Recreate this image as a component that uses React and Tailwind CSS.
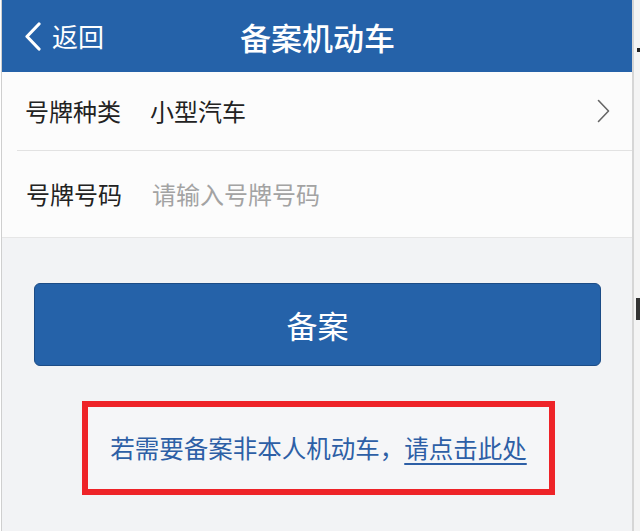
import React from "react";

export default function App() {
  const font = { fontFamily: '"Noto Sans CJK SC", "Noto Sans", sans-serif' };
  return (
    <div className="w-[640px] h-[531px] flex overflow-hidden bg-[#f2f3f5]" style={font}>
      {/* left edge */}
      <div className="w-[2px] h-full bg-white border-r border-[#cfcfcf] shrink-0" />
      {/* main phone screen */}
      <div className="w-[630px] h-full flex flex-col bg-[#f2f3f5] shrink-0">
        <div className="h-[72px] bg-[#2562a9] flex items-center relative shrink-0">
          <div className="flex items-center pl-[21px]">
            <svg width="19" height="29" viewBox="0 0 19 29" className="mr-[10px]">
              <polyline points="16,2 4,14.5 16,27" fill="none" stroke="white" strokeWidth="3.2" strokeLinecap="round" strokeLinejoin="round" />
            </svg>
            <span className="text-white text-[26px] leading-none">返回</span>
          </div>
          <div className="absolute inset-0 flex items-center justify-center pointer-events-none">
            <span className="text-white text-[31px] leading-none font-medium pl-[1px]">备案机动车</span>
          </div>
        </div>
        <div className="bg-[#fcfcfc] flex flex-col shrink-0">
          <div className="h-[78px] flex items-center pl-[23px] pr-[22px]">
            <span className="text-[24px] leading-none text-[#222] w-[125px]">号牌种类</span>
            <span className="text-[24px] leading-none text-[#222] flex-1">小型汽车</span>
            <svg width="13" height="24" viewBox="0 0 13 24">
              <polyline points="1.5,1.5 11.5,12 1.5,22.5" fill="none" stroke="#666" strokeWidth="1.6" strokeLinecap="round" strokeLinejoin="round" />
            </svg>
          </div>
          <div className="ml-[15px] h-px bg-[#e2e2e2]" />
          <div className="h-[87px] flex items-center pl-[24px] border-b border-[#e6e6e6]">
            <span className="text-[24px] leading-none text-[#222] w-[126px]">号牌号码</span>
            <span className="text-[24px] leading-none text-[#a3a3a3]">请输入号牌号码</span>
          </div>
        </div>
        <div className="mt-[45px] ml-[32px] mr-[31px] h-[83px] rounded-[6px] bg-[#2562a9] border border-[#1c4c86] flex items-center justify-center shrink-0">
          <span className="text-white text-[31px] leading-none">备案</span>
        </div>
        <div className="mt-[35px] ml-[80px] w-[473px] h-[94px] border-[6px] border-[#ee2328] bg-[#f5f6f8] flex items-center justify-center shrink-0">
          <span className="text-[24.5px] leading-none text-[#2d5fa6]">
            若需要备案非本人机动车，<span className="underline underline-offset-[5px] decoration-[1.5px]">请点击此处</span>
          </span>
        </div>
      </div>
      {/* right edge */}
      <div className="flex-1 h-full bg-[#f4f4f4] border-l-2 border-[#d6d6d6] flex flex-col">
        <div className="mt-[48px] ml-[3px] w-[3px] h-[4px] bg-[#222]" />
        <div className="mt-[246px] ml-[2px] w-[4px] h-[22px] bg-[#333]" />
      </div>
    </div>
  );
}
